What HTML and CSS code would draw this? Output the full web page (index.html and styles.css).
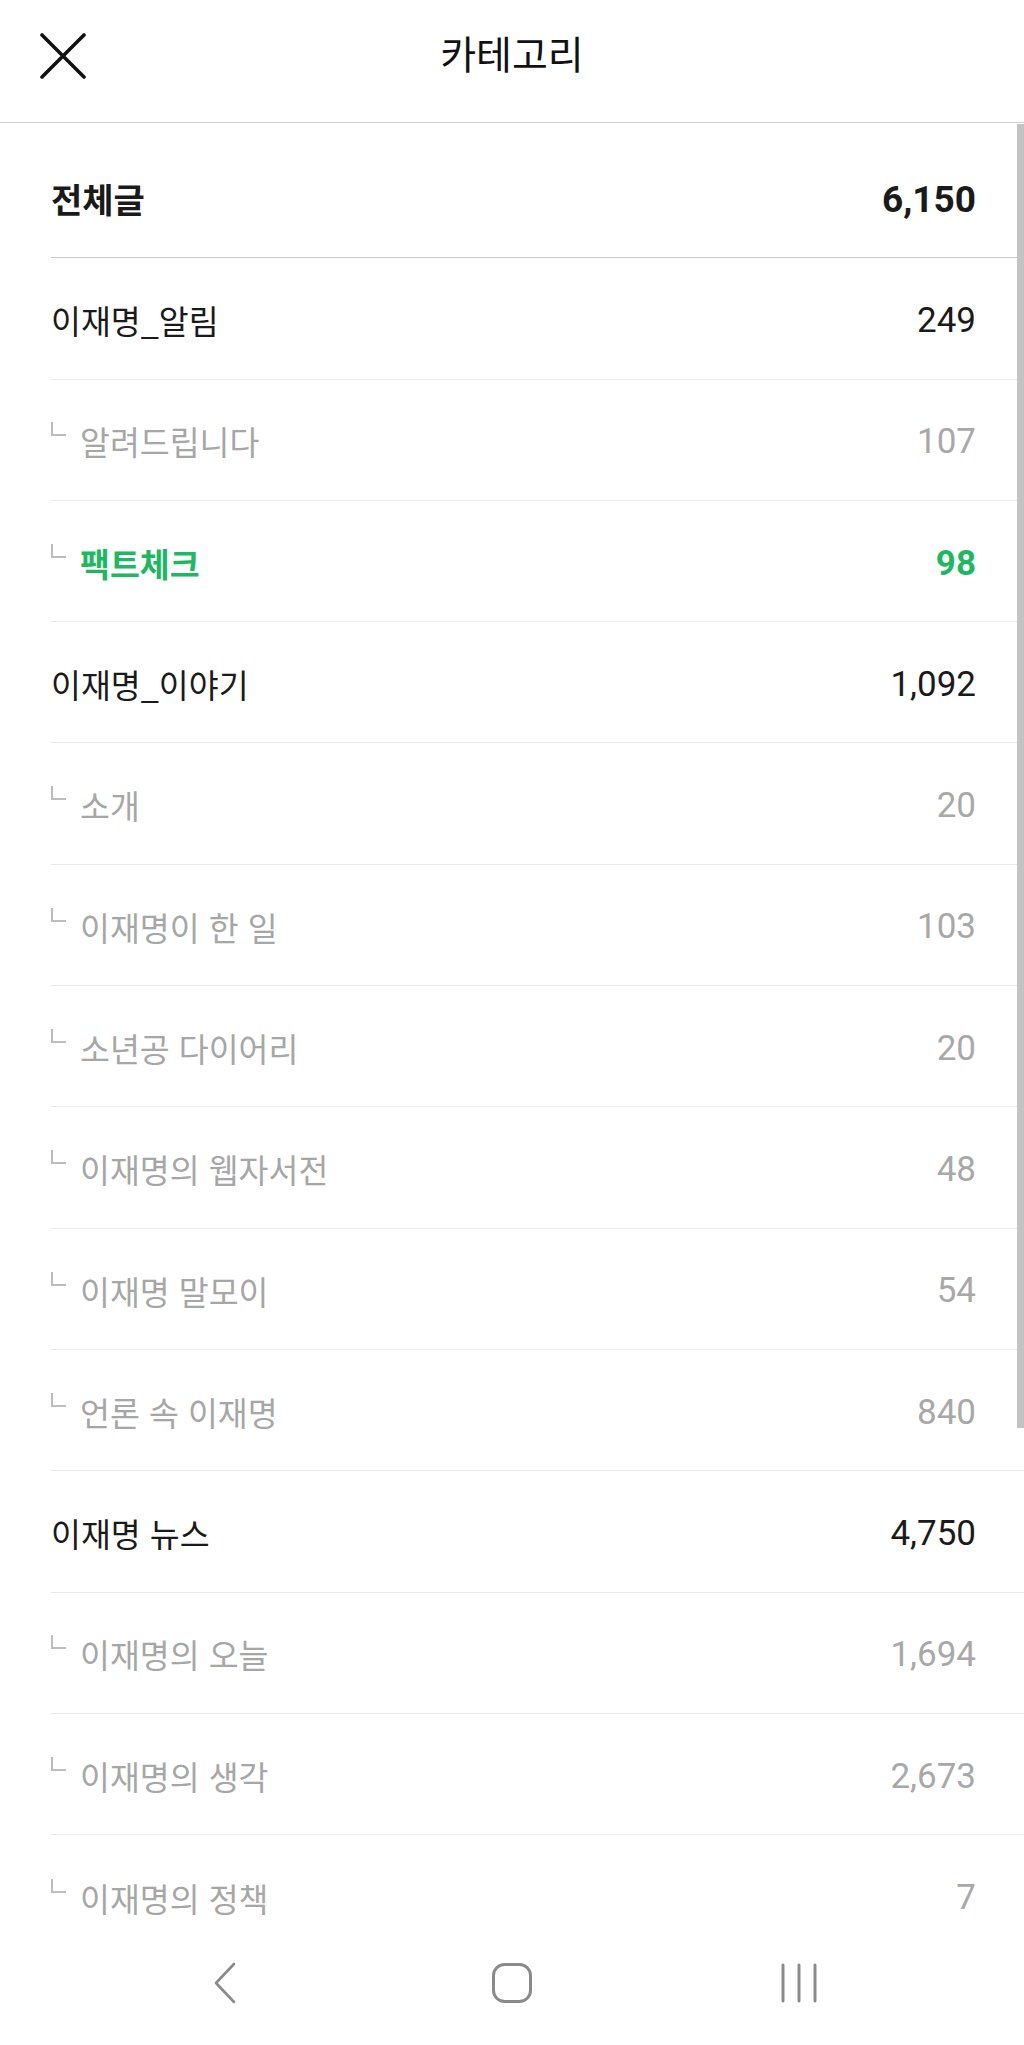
FILE: index.html
```html
<!DOCTYPE html>
<html lang="ko">
<head>
  <meta charset="UTF-8">
  <meta name="viewport" content="width=device-width, initial-scale=1.0">
  <title>카테고리</title>
  <link rel="stylesheet" href="styles.css">
</head>
<body>
  <header class="top">
    <button class="close" aria-label="닫기">
      <svg width="46" height="46" viewBox="0 0 46 46">
        <path d="M2 2 L44 44 M44 2 L2 44" stroke="#111" stroke-width="3.6" stroke-linecap="round" fill="none"/>
      </svg>
    </button>
    <h1>카테고리</h1>
  </header>

  <main class="content">
    <ul class="cat-list">
      <li class="row total"><span class="name">전체글</span><span class="count">6,150</span></li>
      <li class="row"><span class="name">이재명_알림</span><span class="count">249</span></li>
      <li class="row sub"><span class="name">알려드립니다</span><span class="count">107</span></li>
      <li class="row sub active"><span class="name">팩트체크</span><span class="count">98</span></li>
      <li class="row"><span class="name">이재명_이야기</span><span class="count">1,092</span></li>
      <li class="row sub"><span class="name">소개</span><span class="count">20</span></li>
      <li class="row sub"><span class="name">이재명이 한 일</span><span class="count">103</span></li>
      <li class="row sub"><span class="name">소년공 다이어리</span><span class="count">20</span></li>
      <li class="row sub"><span class="name">이재명의 웹자서전</span><span class="count">48</span></li>
      <li class="row sub"><span class="name">이재명 말모이</span><span class="count">54</span></li>
      <li class="row sub"><span class="name">언론 속 이재명</span><span class="count">840</span></li>
      <li class="row"><span class="name">이재명 뉴스</span><span class="count">4,750</span></li>
      <li class="row sub"><span class="name">이재명의 오늘</span><span class="count">1,694</span></li>
      <li class="row sub"><span class="name">이재명의 생각</span><span class="count">2,673</span></li>
      <li class="row sub last"><span class="name">이재명의 정책</span><span class="count">7</span></li>
    </ul>
    <div class="scrollbar"></div>
  </main>

  <nav class="sysnav">
    <span class="nav-btn">
      <svg width="26" height="42" viewBox="0 0 26 42">
        <path d="M22 2 L4 21 L22 40" stroke="#8a8a8a" stroke-width="2.6" stroke-linecap="round" stroke-linejoin="round" fill="none"/>
      </svg>
    </span>
    <span class="nav-btn">
      <svg width="42" height="42" viewBox="0 0 42 42">
        <rect x="2.5" y="2.5" width="37" height="37" rx="11" stroke="#8a8a8a" stroke-width="3" fill="none"/>
      </svg>
    </span>
    <span class="nav-btn">
      <svg width="40" height="40" viewBox="0 0 40 40">
        <path d="M4 2 V38 M20 2 V38 M36 2 V38" stroke="#8a8a8a" stroke-width="3" stroke-linecap="round" fill="none"/>
      </svg>
    </span>
  </nav>
</body>
</html>
```

FILE: styles.css
```css
body {
  margin: 0;
  background: #fff;
  font-family: 'Noto Sans CJK KR', 'Noto Sans', sans-serif;
  color: #1a1a1a;
}
.top {
  height: 122px;
  border-bottom: 1px solid #cfcfcf;
  display: flex;
  align-items: center;
  justify-content: center;
  position: relative;
}
.top h1 {
  margin: 0;
  font-size: 39px;
  font-weight: 400;
  color: #111;
  margin-top: -18px;
}
.close {
  position: absolute;
  left: 40px;
  top: 33px;
  padding: 0;
  border: none;
  background: none;
  line-height: 0;
}
.content {
  position: relative;
  padding-bottom: 90px;
}
.cat-list {
  list-style: none;
  margin: 0;
  padding: 14px 0 0 0;
}
.row {
  display: flex;
  align-items: center;
  justify-content: space-between;
  height: 121.3px;
  box-sizing: border-box;
  margin-left: 51px;
  padding-right: 48px;
  border-bottom: 1px solid #e9e9e9;
  font-size: 32.5px;
  line-height: 1;
}
.row .name {
  padding-top: 4px;
}
.row .count {
  font-family: Roboto, 'Noto Sans', sans-serif;
  font-size: 35px;
  color: #1a1a1a;
  padding-top: 4px;
}
.row.total {
  border-bottom-color: #c6c6c6;
  font-weight: 700;
  font-size: 34px;
}
.row.total .count {
  font-size: 37px;
  font-weight: 700;
  padding-top: 4px;
}
.row.sub .name {
  color: #a6a6a6;
  position: relative;
  padding-left: 29px;
}
.row.sub .name::before {
  content: '';
  position: absolute;
  left: 0;
  top: 1px;
  width: 13px;
  height: 12px;
  border-left: 2px solid #bdbdbd;
  border-bottom: 2px solid #bdbdbd;
}
.row.sub .count {
  color: #a8a8a8;
}
.row.active .name,
.row.active .count {
  color: #1eb862;
  font-weight: 700;
}
.row.last {
  border-bottom: none;
}
.scrollbar {
  position: absolute;
  top: 1px;
  right: 0;
  width: 7px;
  height: 1304px;
  background: #c3c3c3;
}
.sysnav {
  position: fixed;
  left: 0;
  right: 0;
  bottom: 0;
  height: 122px;
  background: #fff;
  display: grid;
  grid-template-columns: repeat(3, 1fr);
  padding: 0 82px;
  align-items: center;
  justify-items: center;
}
.nav-btn {
  line-height: 0;
  margin-top: -2px;
}
```
